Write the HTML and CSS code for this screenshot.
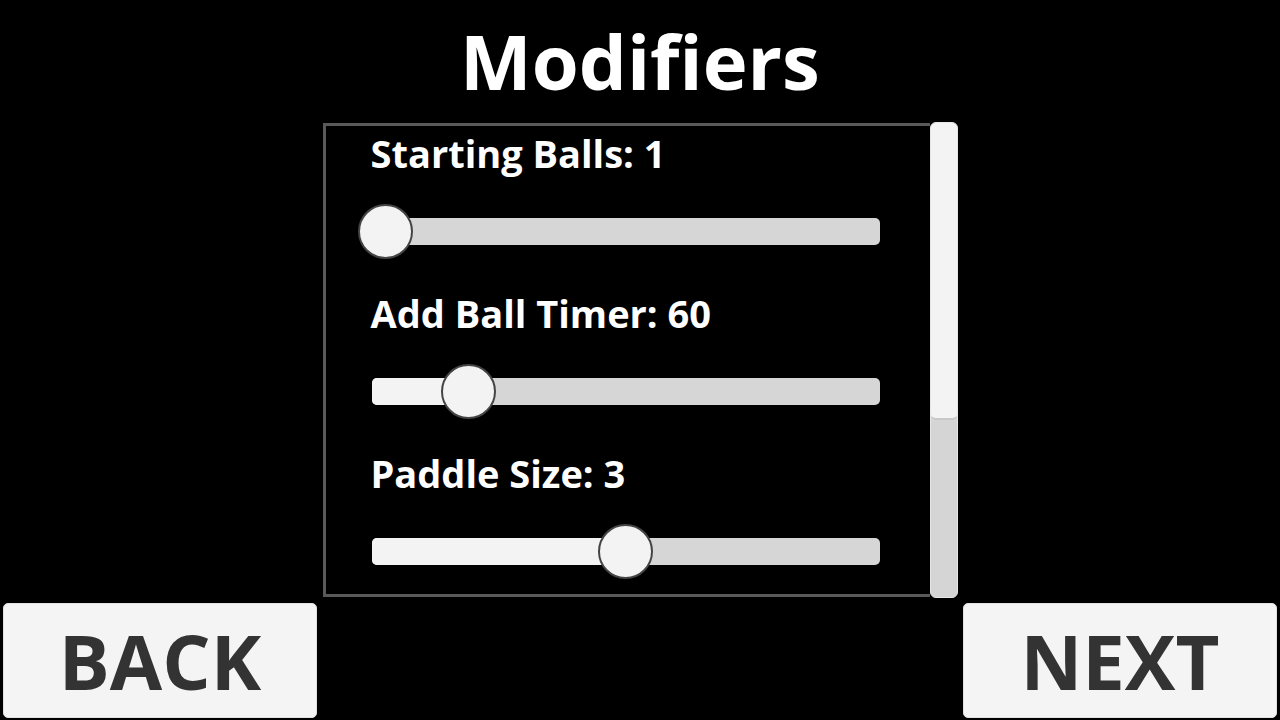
FILE: index.html
```html
<!DOCTYPE html>
<html>
<head>
<meta charset="utf-8">
<link rel="stylesheet" href="styles.css">
</head>
<body>
<div class="screen">
  <h1 class="title">Modifiers</h1>
  <div class="scroll-area">
    <div class="panel">
      <div class="row">
        <div class="label">Starting Balls: 1</div>
        <div class="slider">
          <div class="track">
            <div class="fill" style="width:14px"></div>
            <div class="thumb" style="left:14px"></div>
          </div>
        </div>
      </div>
      <div class="row">
        <div class="label">Add Ball Timer: 60</div>
        <div class="slider">
          <div class="track">
            <div class="fill" style="width:97px"></div>
            <div class="thumb" style="left:97px"></div>
          </div>
        </div>
      </div>
      <div class="row">
        <div class="label">Paddle Size: 3</div>
        <div class="slider">
          <div class="track">
            <div class="fill" style="width:254px"></div>
            <div class="thumb" style="left:254px"></div>
          </div>
        </div>
      </div>
    </div>
    <div class="scrollbar">
      <div class="scroll-thumb"></div>
    </div>
  </div>
  <div class="footer">
    <button class="btn">BACK</button>
    <button class="btn">NEXT</button>
  </div>
</div>
</body>
</html>
```
FILE: styles.css
```css
html, body {
  margin: 0;
  padding: 0;
  background: #000;
}
body {
  width: 1280px;
  height: 720px;
  overflow: hidden;
  font-family: "Open Sans", "DejaVu Sans", sans-serif;
}
.screen {
  display: flex;
  flex-direction: column;
  height: 720px;
}
.title {
  margin: 0;
  height: 122px;
  line-height: 122px;
  font-size: 76px;
  font-weight: 700;
  color: #fff;
  text-align: center;
}
.scroll-area {
  display: flex;
  align-items: center;
  justify-content: center;
  height: 476px;
}
.panel {
  box-sizing: border-box;
  width: 607px;
  height: 474px;
  border: 3px solid #595959;
  border-right: none;
  padding: 5px 0 0 45px;
  display: flex;
  flex-direction: column;
  gap: 32px;
}
.row {
  display: flex;
  flex-direction: column;
}
.label {
  height: 44px;
  line-height: 44px;
  font-size: 38px;
  font-weight: 700;
  color: #fff;
  white-space: nowrap;
}
.slider {
  margin-top: 28px;
  height: 56px;
  display: flex;
  align-items: center;
}
.track {
  position: relative;
  margin-left: 1px;
  width: 508px;
  height: 27px;
  border-radius: 5px;
  background: #d6d6d6;
}
.fill {
  position: absolute;
  left: 0;
  top: 0;
  bottom: 0;
  border-radius: 5px 0 0 5px;
  background: #f3f3f3;
}
.thumb {
  position: absolute;
  top: 50%;
  width: 55px;
  height: 55px;
  margin: -27.5px 0 0 -27.5px;
  border: 2px solid #444;
  border-radius: 50%;
  background: #f3f3f3;
  box-sizing: border-box;
}
.scrollbar {
  box-sizing: border-box;
  width: 28px;
  height: 476px;
  border-radius: 6px;
  background: #d5d5d5;
  border: 1px solid #e6e6e6;
  display: flex;
  flex-direction: column;
}
.scroll-thumb {
  height: 295px;
  border-radius: 5px;
  background: #f3f3f3;
  border-bottom: 2px solid #c8c8c8;
}
.footer {
  margin-top: 5px;
  padding: 0 3px;
  display: flex;
  justify-content: space-between;
}
.btn {
  box-sizing: border-box;
  width: 314px;
  height: 115px;
  border: 1px solid #e2e2e2;
  border-radius: 5px;
  background: #f4f4f4;
  color: #333;
  font-family: "Open Sans", "DejaVu Sans", sans-serif;
  font-size: 76px;
  font-weight: 700;
  padding: 0;
  text-align: center;
}
```
